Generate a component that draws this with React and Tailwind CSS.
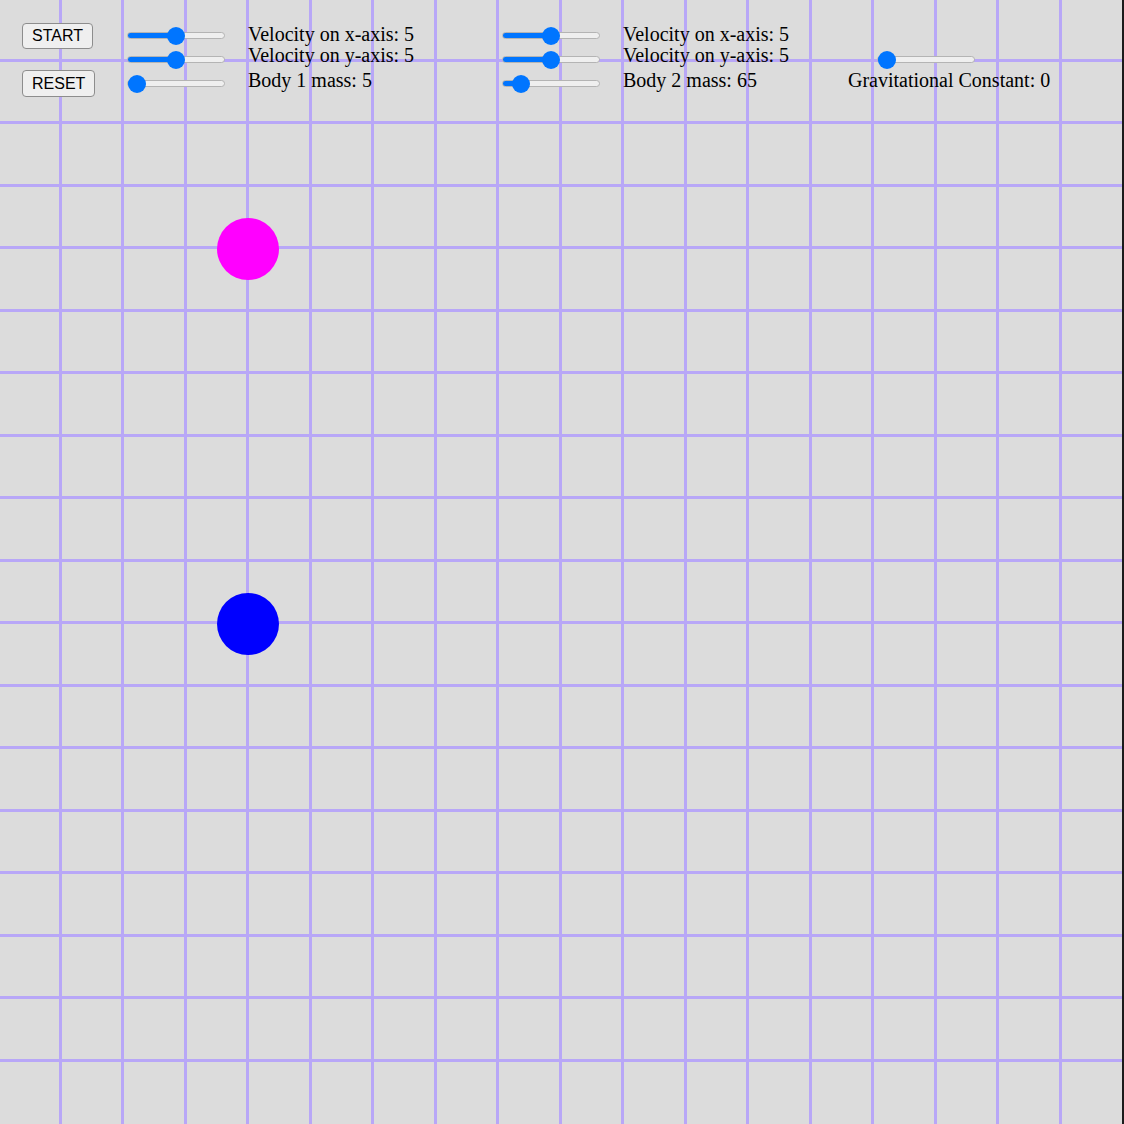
import React, { useState } from 'react';

const serif = { fontFamily: '"Liberation Serif", "Times New Roman", serif' };

// styled range so the track and thumb match the big chrome-style slider
const Slider = ({ min, max, value, onChange }) => {
  const frac = (value - min) / (max - min);
  return (
    <input
      type="range"
      min={min}
      max={max}
      value={value}
      onChange={(e) => onChange(Number(e.target.value))}
      style={{ '--fill': `${9 + frac * 78}px` }}
      className="block appearance-none bg-transparent w-[98px] h-[18px] m-0 cursor-pointer [&::-webkit-slider-runnable-track]:h-[7px] [&::-webkit-slider-runnable-track]:rounded-full [&::-webkit-slider-runnable-track]:border [&::-webkit-slider-runnable-track]:border-[#b4b4b4] [&::-webkit-slider-runnable-track]:bg-[linear-gradient(to_right,#0075ff_var(--fill),#efefef_var(--fill))] [&::-webkit-slider-thumb]:appearance-none [&::-webkit-slider-thumb]:w-[18px] [&::-webkit-slider-thumb]:h-[18px] [&::-webkit-slider-thumb]:mt-[-5.5px] [&::-webkit-slider-thumb]:rounded-full [&::-webkit-slider-thumb]:bg-[#0075ff] [&::-webkit-slider-thumb]:border-0"
    />
  );
};

const BodyControls = ({ vx, vy, mass, massSlider, setVx, setVy, setMass, label }) => (
  <>
    <div className="flex flex-col gap-[6px] pt-[26px] w-[121px] shrink-0">
      <Slider min={0} max={10} value={vx} onChange={setVx} />
      <Slider min={0} max={10} value={vy} onChange={setVy} />
      <Slider min={0} max={80} value={massSlider} onChange={setMass} />
    </div>
    <div className="flex flex-col text-[20px] leading-[22px] text-black pt-[23px]" style={serif}>
      <p className="whitespace-nowrap h-[21px]">Velocity on x-axis: {vx}</p>
      <p className="whitespace-nowrap">Velocity on y-axis: {vy}</p>
      <p className="whitespace-nowrap mt-[3px]">{label} mass: {mass}</p>
    </div>
  </>
);

const App = () => {
  const [b1, setB1] = useState({ vx: 5, vy: 5, mass: 5, slider: 0 });
  const [b2, setB2] = useState({ vx: 5, vy: 5, mass: 65, slider: 9 });
  const [g, setG] = useState(0);

  return (
    <div className="relative w-[1124px] h-[1124px] overflow-hidden border-r-2 border-[#1c1c1c] bg-[#dcdcdc] bg-no-repeat bg-[repeating-linear-gradient(to_right,transparent_0_59px,#b8a7f7_59px_62px,transparent_62px_62.5px),repeating-linear-gradient(to_bottom,transparent_0_59px,#b8a7f7_59px_62px,transparent_62px_62.5px)] bg-[length:1064px_100%,100%_1064px]">
      <div className="flex items-start">
        {/* buttons */}
        <div className="flex flex-col items-start pl-[22px] w-[127px] shrink-0" style={{ fontFamily: '"Liberation Sans", Arial, sans-serif' }}>
          <button className="mt-[23px] h-[26px] px-[9px] text-[16px] leading-[18px] text-black bg-[#efefef] border border-[#8d8d8d] rounded-[4px]">
            START
          </button>
          <button className="mt-[21px] h-[27px] px-[9px] text-[16px] leading-[18px] text-black bg-[#efefef] border border-[#8d8d8d] rounded-[4px]">
            RESET
          </button>
        </div>

        <div className="flex w-[375px] shrink-0">
          <BodyControls
            label="Body 1"
            vx={b1.vx}
            vy={b1.vy}
            mass={b1.mass}
            massSlider={b1.slider}
            setVx={(v) => setB1({ ...b1, vx: v })}
            setVy={(v) => setB1({ ...b1, vy: v })}
            setMass={(v) => setB1({ ...b1, slider: v })}
          />
        </div>

        <div className="flex w-[346px] shrink-0">
          <BodyControls
            label="Body 2"
            vx={b2.vx}
            vy={b2.vy}
            mass={b2.mass}
            massSlider={b2.slider}
            setVx={(v) => setB2({ ...b2, vx: v })}
            setVy={(v) => setB2({ ...b2, vy: v })}
            setMass={(v) => setB2({ ...b2, slider: v })}
          />
        </div>

        {/* gravitational constant */}
        <div className="flex flex-col">
          <div className="pl-[29px] mt-[50px]">
            <Slider min={0} max={10} value={g} onChange={setG} />
          </div>
          <p className="mt-[1px] text-[20px] leading-[22px] text-black whitespace-nowrap" style={serif}>
            Gravitational Constant: {g}
          </p>
        </div>
      </div>

      {/* bodies */}
      <div className="absolute left-[217px] top-[218px] w-[62px] h-[62px] rounded-full bg-[#ff00ff]" />
      <div className="absolute left-[217px] top-[593px] w-[62px] h-[62px] rounded-full bg-[#0000ff]" />
    </div>
  );
};

export default App;
